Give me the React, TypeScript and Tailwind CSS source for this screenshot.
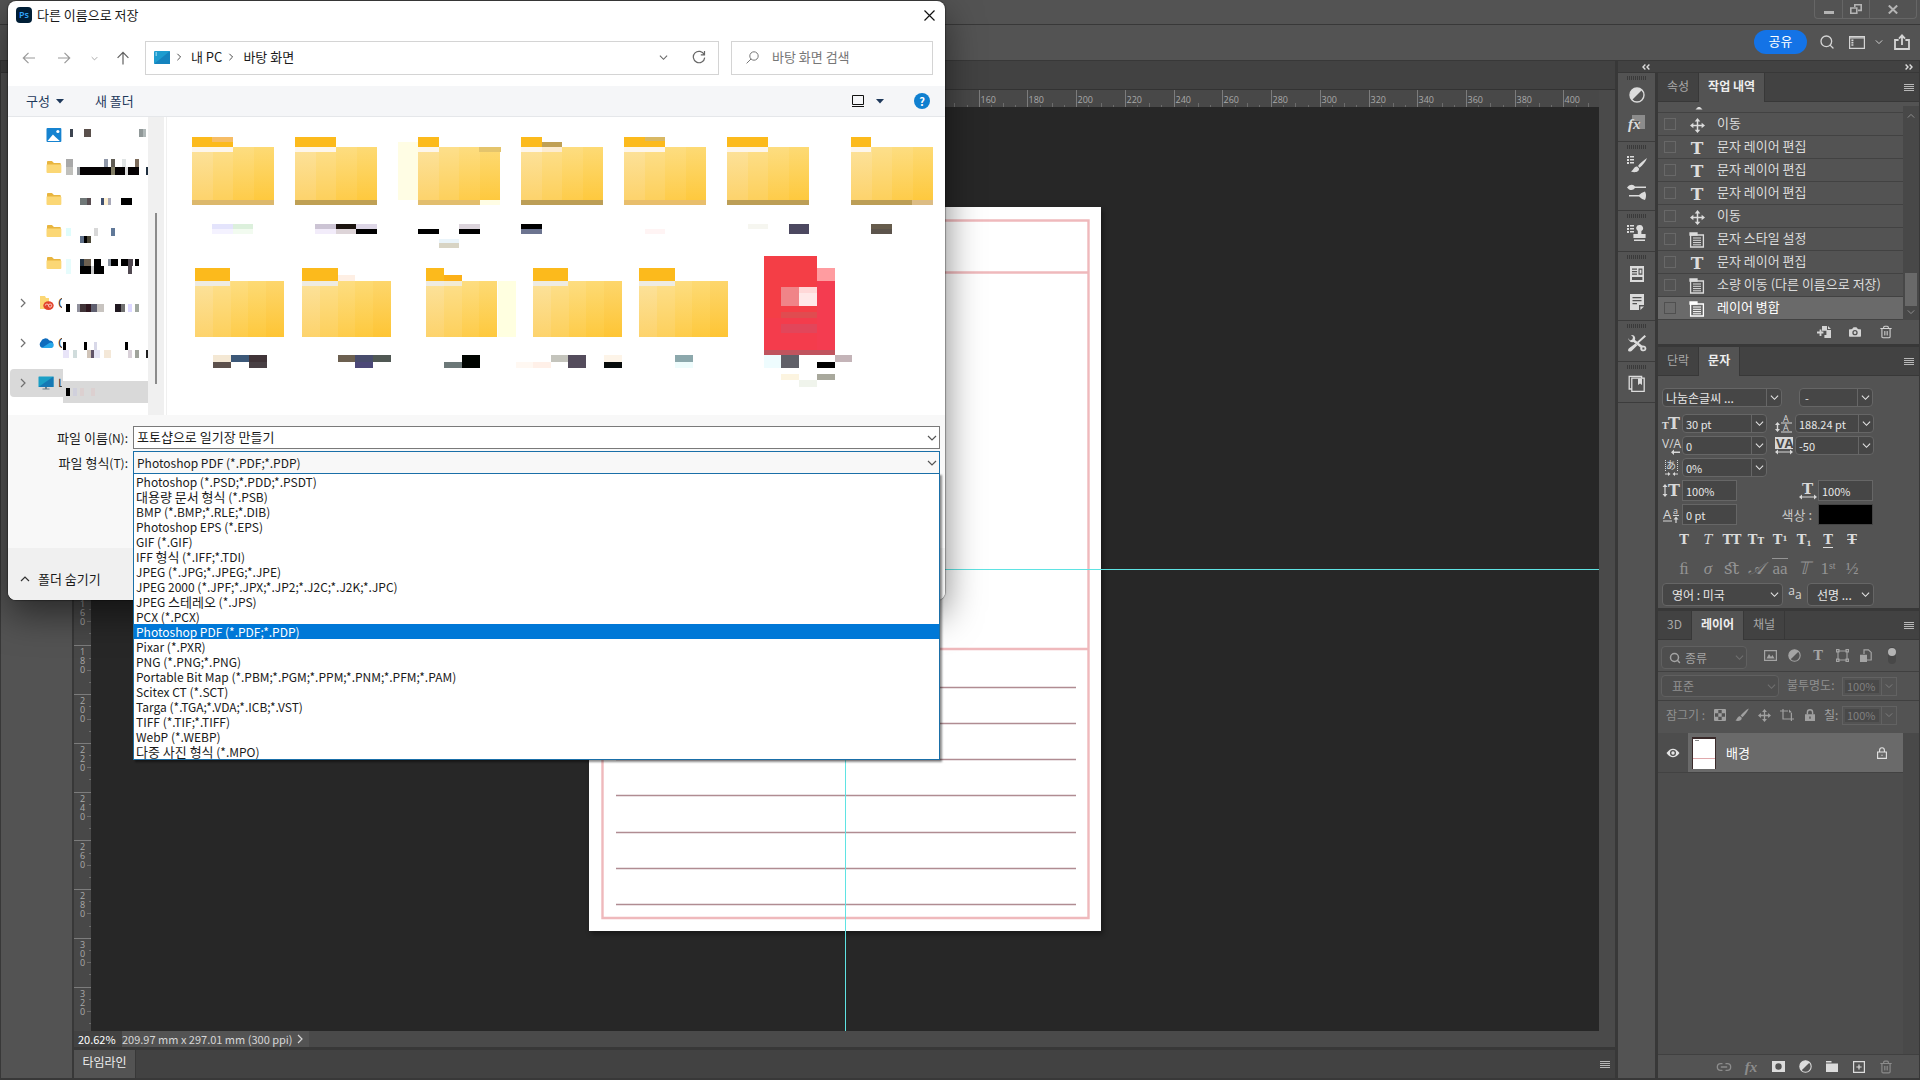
import type { ReactNode } from "react";
import { Search, Trash2, Camera, Link2 } from "lucide-react";

const fileTypes = [
  "Photoshop (*.PSD;*.PDD;*.PSDT)",
  "대용량 문서 형식 (*.PSB)",
  "BMP (*.BMP;*.RLE;*.DIB)",
  "Photoshop EPS (*.EPS)",
  "GIF (*.GIF)",
  "IFF 형식 (*.IFF;*.TDI)",
  "JPEG (*.JPG;*.JPEG;*.JPE)",
  "JPEG 2000 (*.JPF;*.JPX;*.JP2;*.J2C;*.J2K;*.JPC)",
  "JPEG 스테레오 (*.JPS)",
  "PCX (*.PCX)",
  "Photoshop PDF (*.PDF;*.PDP)",
  "Pixar (*.PXR)",
  "PNG (*.PNG;*.PNG)",
  "Portable Bit Map (*.PBM;*.PGM;*.PPM;*.PNM;*.PFM;*.PAM)",
  "Scitex CT (*.SCT)",
  "Targa (*.TGA;*.VDA;*.ICB;*.VST)",
  "TIFF (*.TIF;*.TIFF)",
  "WebP (*.WEBP)",
  "다중 사진 형식 (*.MPO)",
];
const selectedType = "Photoshop PDF (*.PDF;*.PDP)";

const historyStates = [
  { icon: "move", name: "이동" },
  { icon: "type", name: "문자 레이어 편집" },
  { icon: "type", name: "문자 레이어 편집" },
  { icon: "type", name: "문자 레이어 편집" },
  { icon: "move", name: "이동" },
  { icon: "doc", name: "문자 스타일 설정" },
  { icon: "type", name: "문자 레이어 편집" },
  { icon: "doc", name: "소량 이동 (다른 이름으로 저장)" },
  { icon: "doc", name: "레이어 병합" },
];

// x, y, width, height, fill
type Block = [number, number, number, number, string];

function Blocks({ blocks }: { blocks: Block[] }) {
  return (
    <>
      {blocks.map(([x, y, w, h, fill], i) => (
        <rect key={i} x={x} y={y} width={w} height={h} fill={fill} />
      ))}
    </>
  );
}

/* ---------- icons ---------- */

function Chevron({ dir = "down", size = 10, className = "" }: { dir?: "down" | "up" | "right"; size?: number; className?: string }) {
  const d = { down: "M1 3 L5 7 L9 3", up: "M1 7 L5 3 L9 7", right: "M3 1 L7 5 L3 9" }[dir];
  return (
    <svg width={size} height={size} viewBox="0 0 10 10" fill="none" stroke="currentColor" strokeWidth="1.2" className={`shrink-0 ${className}`} aria-hidden="true">
      <path d={d} />
    </svg>
  );
}

function MoveIcon({ size = 16 }: { size?: number }) {
  return (
    <svg width={size} height={size} viewBox="0 0 16 16" fill="currentColor" aria-hidden="true">
      <path d="M8 0 L11 3.6 H8.8 V7.2 H12.4 V5 L16 8 L12.4 11 V8.8 H8.8 V12.4 H11 L8 16 L5 12.4 H7.2 V8.8 H3.6 V11 L0 8 L3.6 5 V7.2 H7.2 V3.6 H5 Z" />
    </svg>
  );
}

function DocIcon() {
  return (
    <svg width="16" height="16" viewBox="0 0 16 16" fill="none" stroke="currentColor" strokeWidth="1.3" aria-hidden="true">
      <path d="M1.6 3 H14.4 V15 H1.6 Z" />
      <path d="M1 1 H8 V3 H1 Z" fill="currentColor" />
      <path d="M4 6 H12 M4 8.3 H12 M4 10.6 H12 M4 12.8 H12" strokeWidth="1" />
    </svg>
  );
}

function SlabT({ className = "" }: { className?: string }) {
  return <span className={`font-['DejaVu_Serif',serif] font-bold ${className}`}>T</span>;
}

function HalfCircle({ size = 16 }: { size?: number }) {
  return (
    <svg width={size} height={size} viewBox="0 0 16 16" aria-hidden="true">
      <circle cx="8" cy="8" r="7" fill="none" stroke="currentColor" strokeWidth="1.3" />
      <path d="M13 3 A7 7 0 0 0 3 13 Z" fill="currentColor" />
    </svg>
  );
}

function BrushIcon({ size = 14 }: { size?: number }) {
  return (
    <svg width={size} height={size} viewBox="0 0 14 14" fill="currentColor" aria-hidden="true">
      <path d="M13.8 0.4 C11 1.8 7.4 5 5.6 7.6 L7.4 9.2 C10 6.8 12.6 3.4 13.8 0.4 Z" />
      <path d="M5 8.2 C2.6 8 2.4 10.8 0.4 12.6 C3 13.8 7 12.8 6.8 9.8 Z" />
    </svg>
  );
}

function PanelMenu() {
  return (
    <button aria-label="패널 메뉴" className="text-[#b8b8b8]">
      <svg width="10" height="9" viewBox="0 0 10 9" stroke="currentColor" strokeWidth="1">
        <path d="M0 1.5 H10 M0 3.5 H10 M0 5.5 H10 M0 7.5 H10" />
      </svg>
    </button>
  );
}

function PsLogo() {
  return (
    <span className="flex h-4 w-4 items-center justify-center rounded-sm bg-[#001e36] font-['Open_Sans',sans-serif] text-[9px] font-semibold text-[#31a8ff]">
      Ps
    </span>
  );
}

/* ---------- save dialog ---------- */

function SmallFolder() {
  return (
    <svg width="16" height="14" viewBox="0 0 16 14" aria-hidden="true">
      <path d="M1 2 Q1 1 2 1 H6 L8 3 H14 Q15 3 15 4 V8 H1 Z" fill="#e8b53f" />
      <path d="M0.5 4.5 H14.5 Q15.5 4.5 15.5 5.5 V12 Q15.5 13 14.5 13 H1.5 Q0.5 13 0.5 12 Z" fill="#fbd775" />
    </svg>
  );
}

const quickFolders: Block[][] = [
  [
    [3, 8, 7, 8, "#a8a8a8"], [41, 8, 4, 8, "#9098a8"], [48, 8, 4, 8, "#605c54"], [59, 8, 4, 8, "#e0e4e4"], [72, 8, 4, 8, "#7c6c5c"],
    [3, 16, 7, 8, "#c0c0bc"], [14, 16, 3, 8, "#989ca0"], [17, 16, 59, 8, "#050203"], [48, 16, 4, 8, "#807c64"], [62, 16, 3, 8, "#dddddd"], [83, 16, 3, 8, "#203040"],
  ],
  [
    [17, 15, 7, 7, "#707878"], [24, 15, 4, 7, "#584c50"], [38, 15, 3, 7, "#405070"], [41, 15, 4, 7, "#fff0d0"], [45, 15, 3, 7, "#a8a8b8"], [58, 15, 11, 7, "#000000"],
  ],
  [
    [3, 13, 5, 8, "#dffcfc"], [31, 13, 4, 8, "#d8d8d8"], [48, 13, 4, 8, "#607898"],
    [17, 21, 4, 7, "#607088"], [21, 21, 3, 7, "#000000"], [24, 21, 4, 7, "#4c4838"],
  ],
  [
    [3, 12, 5, 15, "#e6fcfc"], [17, 12, 4, 7, "#203040"], [21, 12, 7, 7, "#6c6050"], [31, 12, 7, 7, "#000000"], [45, 12, 3, 7, "#8c94a0"], [48, 12, 7, 7, "#000000"], [58, 12, 7, 7, "#000000"], [65, 12, 5, 7, "#504850"], [72, 12, 4, 7, "#000000"],
    [17, 19, 11, 8, "#000000"], [28, 19, 3, 8, "#cccccc"], [31, 19, 10, 8, "#000000"], [65, 19, 4, 8, "#504850"],
  ],
];

const driveBlocks: Block[] = [
  [3, 21, 4, 8, "#000000"], [14, 21, 3, 8, "#90909c"], [17, 21, 6, 8, "#403438"], [23, 21, 5, 8, "#301820"], [28, 21, 6, 8, "#606070"], [34, 21, 7, 8, "#c8c4c0"],
  [52, 21, 6, 8, "#201820"], [58, 21, 4, 8, "#707070"], [65, 21, 4, 8, "#dcd8ff"], [72, 21, 4, 8, "#a0a8a0"],
];
const oneDriveBlocks: Block[] = [
  [0, 19, 3, 8, "#000000"], [21, 19, 3, 8, "#000000"], [31, 19, 3, 8, "#d8d8e8"], [62, 19, 3, 8, "#000000"],
  [0, 27, 6, 8, "#e8e4f8"], [10, 27, 4, 8, "#d0dcdc"], [24, 27, 4, 8, "#d0c4b8"], [28, 27, 4, 8, "#605468"], [31, 27, 6, 8, "#e4e4f4"], [41, 27, 7, 8, "#f4e8d8"], [65, 27, 4, 8, "#d8d0d8"], [72, 27, 4, 8, "#a0a49c"], [83, 27, 3, 8, "#202020"],
];
const pcBlocks: Block[] = [
  [0, 18, 86, 22, "#d9d9d9"], [3, 25, 4, 8, "#000000"], [10, 25, 4, 8, "#d0d0dc"], [17, 25, 4, 8, "#dcd0d0"], [28, 25, 4, 8, "#dcd0d0"],
];

function TreeRow({ icon, letter, blocks, active = false }: { icon: ReactNode; letter: string; blocks: Block[]; active?: boolean }) {
  return (
    <li className="flex h-10 items-center pl-0.5">
      <div className={`flex h-7 w-[53px] items-center rounded-l-sm pl-2 ${active ? "bg-[#d9d9d9]" : ""}`}>
        <Chevron dir="right" className="text-[#707070]" />
        <span className="ml-2.5 flex w-4 shrink-0 justify-center">{icon}</span>
        <span className="ml-1 w-1 overflow-hidden text-[13px] text-[#333]">{letter}</span>
      </div>
      <svg width="86" height="40" aria-hidden="true">
        <Blocks blocks={blocks} />
      </svg>
    </li>
  );
}

function NavPane() {
  return (
    <nav aria-label="탐색 창" className="flex w-[159px] shrink-0 border-r border-[#f0f0f0] pr-0.5">
      <ul className="w-[140px] overflow-hidden pt-0.5">
        <li className="flex h-8 items-center pl-[38px]">
          <svg width="16" height="16" viewBox="0 0 16 16" aria-hidden="true">
            <rect x="0.5" y="1" width="15" height="14" rx="1" fill="#1683d0" />
            <path d="M1.5 14 L7 7.5 L9.5 10 L14 14 Z" fill="#fff" />
            <circle cx="12" cy="4.5" r="1.6" fill="#fff" />
          </svg>
          <svg width="86" height="32" className="ml-px" aria-hidden="true">
            <Blocks blocks={[[7, 10, 3, 8, "#3c4450"], [21, 10, 7, 8, "#5a504c"], [76, 10, 4, 8, "#909898"], [80, 10, 3, 8, "#b0b8b8"]]} />
          </svg>
        </li>
        {quickFolders.map((blocks, i) => (
          <li key={i} className="flex h-8 items-center pl-[38px]">
            <SmallFolder />
            <svg width="86" height="32" className="ml-px" aria-hidden="true">
              <Blocks blocks={blocks} />
            </svg>
          </li>
        ))}
        <li className="h-1" />
        <TreeRow
          letter="C"
          blocks={driveBlocks}
          icon={
            <svg width="16" height="16" viewBox="0 0 16 16" aria-hidden="true">
              <path d="M2 1 H7 L8 3 H11 V14 H2 Z" fill="#fbd775" />
              <ellipse cx="10.5" cy="10.6" rx="5.2" ry="4.4" fill="#e2432c" />
              <path d="M7.3 10.6 a1.6 1.6 0 1 1 3.2 0 a1.6 1.6 0 1 0 3.2 0 a1.6 1.6 0 1 0 -3.2 0" fill="none" stroke="#ffd8d0" strokeWidth="0.9" />
            </svg>
          }
        />
        <TreeRow
          letter="O"
          blocks={oneDriveBlocks}
          icon={
            <svg width="16" height="12" viewBox="0 0 17 12" className="shrink-0" aria-hidden="true">
              <path d="M4 11 A4 4 0 0 1 3 4.6 A5 5 0 0 1 12 3.4 A4 4 0 0 1 14 11 Z" fill="#0f6cbd" />
              <path d="M4 11.2 L12 6 A3 3 0 0 1 16.6 8 A3 3 0 0 1 14 11.2 Z" fill="#28a8ea" />
            </svg>
          }
        />
        <TreeRow
          letter="내"
          active
          blocks={pcBlocks}
          icon={
            <svg width="16" height="14" viewBox="0 0 16 14" aria-hidden="true">
              <rect x="0.5" y="0.5" width="15" height="10.5" rx="0.5" fill="#1b9fc6" />
              <path d="M0.5 11 L15.5 0.5 V11 Z" fill="#1578b4" />
              <path d="M7 11 H9 V13 H7 Z M4.5 12.6 H11.5 V13.6 H4.5 Z" fill="#6d7f8a" />
            </svg>
          }
        />
      </ul>
      <div className="flex flex-1 justify-center bg-[#f0f0f0] pt-24">
        <div className="h-[171px] w-0.5 bg-[#8b8b8b]" />
      </div>
    </nav>
  );
}

const folderTones = [
  ["#fce29c", "#fdd36c"],
  ["#fddf8b", "#fdd05c"],
  ["#fddd80", "#fecc4a"],
  ["#fdda74", "#fec93e"],
  ["#fdd66c", "#fec535"],
];

// top-row thumbnails are 4 mosaic columns wide, bottom-row ones up to 5
function FolderTile({ id, cols, colWidth, top, tab, bottom, strip, extra = [] }: {
  id: string; cols: number; colWidth: number; top: number; tab: number; bottom: number; strip?: string; extra?: Block[];
}) {
  const bodyTop = top + (cols === 4 && strip !== "none" ? 10 : 13);
  const w = cols * colWidth;
  return (
    <>
      <defs>
        {folderTones.map(([from, to], i) => (
          <linearGradient key={i} id={`${id}-${i}`} x1="0" y1="0" x2="0" y2="1">
            <stop offset="0" stopColor={from} />
            <stop offset="1" stopColor={to} />
          </linearGradient>
        ))}
      </defs>
      <rect x="0" y={top} width={tab} height={bodyTop - top} fill="#fcba1c" />
      {Array.from({ length: cols }, (_, i) => (
        <rect key={i} x={i * colWidth} y={bodyTop} width={colWidth} height={bottom - bodyTop} fill={`url(#${id}-${i})`} shapeRendering="crispEdges" />
      ))}
      <rect x="0" y={bodyTop} width={tab} height="5" fill={strip === "none" ? "#eeebe2" : "#fdf6ec"} />
      {strip && strip !== "none" && <rect x="0" y={bottom} width={w} height="5" fill={strip} />}
      <Blocks blocks={extra} />
    </>
  );
}

// y values are measured from the top of the thumbnail row
const topRow: { cell: string; tab: number; strip: string; extra: Block[] }[] = [
  { cell: "w-[103px]", tab: 41, strip: "#dcb86c", extra: [[20, 20, 21, 5, "#f6bd66"], [20, 107, 21, 5, "#e4e4fc"], [41, 107, 20, 5, "#dcf0dc"], [20, 112, 21, 5, "#f4f2ff"], [41, 112, 20, 5, "#f2fbf0"]] },
  { cell: "w-[123px]", tab: 41, strip: "#bfa054", extra: [[20, 107, 21, 5, "#ccc4d4"], [41, 107, 20, 5, "#1c1410"], [61, 107, 21, 5, "#ddd6e6"], [20, 112, 21, 5, "#f2ecfa"], [41, 112, 20, 5, "#ddd4d8"], [61, 112, 21, 5, "#000000"]] },
  { cell: "w-[103px]", tab: 21, strip: "#e2be6e", extra: [[-20, 25, 20, 58, "#fffde4"], [61, 30, 22, 5, "#e4c46c"], [62, 83, 20, 5, "#fffde4"], [0, 112, 21, 5, "#000000"], [41, 107, 21, 5, "#dcd4dc"], [41, 112, 21, 5, "#000000"], [21, 122, 20, 4, "#eaf4fa"], [21, 126, 20, 5, "#d8d4c4"]] },
  { cell: "w-[103px]", tab: 21, strip: "#bc9e56", extra: [[21, 25, 20, 5, "#c0a054"], [21, 30, 20, 5, "#fdecd0"], [0, 107, 21, 5, "#000000"], [0, 112, 21, 5, "#6c7490"]] },
  { cell: "w-[103px]", tab: 41, strip: "#e8be6c", extra: [[21, 20, 20, 4, "#d8b864"], [21, 112, 20, 5, "#fff4f4"]] },
  { cell: "w-[124px]", tab: 41, strip: "#bc9e56", extra: [[21, 107, 20, 5, "#f6f6f0"], [62, 107, 20, 10, "#4c4860"]] },
  { cell: "w-[82px]", tab: 20, strip: "#bc9e56", extra: [[61, 83, 21, 5, "#dcbc84"], [20, 107, 21, 5, "#665c4c"], [20, 112, 21, 5, "#5c544c"]] },
];

const bottomRow: { cell: string; cols: number; tab: number; extra: Block[] }[] = [
  { cell: "w-[107px]", cols: 5, tab: 35, extra: [[18, 107, 18, 7, "#f4e8d4"], [36, 107, 18, 7, "#3c5878"], [54, 107, 18, 7, "#403438"], [18, 114, 18, 6, "#5c504c"], [54, 114, 18, 6, "#484044"]] },
  { cell: "w-[124px]", cols: 5, tab: 36, extra: [[36, 27, 17, 6, "#feefe4"], [36, 107, 17, 7, "#6c6050"], [53, 107, 18, 7, "#484c6c"], [53, 114, 18, 6, "#4c4878"], [71, 107, 18, 7, "#505854"]] },
  { cell: "w-[107px]", cols: 4, tab: 18, extra: [[18, 27, 18, 6, "#fcb018"], [18, 33, 18, 5, "#f2ebd4"], [72, 33, 18, 56, "#ffffe0"], [18, 114, 18, 6, "#6c7878"], [36, 107, 18, 13, "#000400"]] },
  { cell: "w-[106px]", cols: 5, tab: 35, extra: [[-17, 114, 17, 6, "#fff8f2"], [0, 114, 18, 6, "#fff0e8"], [18, 107, 17, 7, "#c4c4bc"], [35, 107, 18, 13, "#544c5c"], [71, 107, 18, 7, "#fdf4e8"], [71, 114, 18, 6, "#080c0c"]] },
  { cell: "w-[125px]", cols: 5, tab: 36, extra: [[36, 107, 18, 7, "#8ca8ac"], [36, 114, 18, 6, "#eefcfc"]] },
];

const pdfBlocks: Block[] = [
  [0, 8, 53, 94, "#f43e46"], [53, 33, 18, 69, "#f43c50"], [53, 20, 18, 13, "#ff9ca0"], [0, 70, 53, 32, "#f43c4c"],
  [17, 39, 18, 19, "#f08488"], [35, 39, 18, 6, "#ffd8d8"], [35, 45, 18, 13, "#ffe8e8"], [17, 64, 36, 6, "#e04c50"], [17, 76, 36, 9, "#e2465a"],
  [0, 102, 71, 5, "#c0545e"], [17, 107, 18, 13, "#606068"], [53, 114, 18, 6, "#000000"], [71, 107, 17, 7, "#c4b4b8"],
  [0, 107, 17, 13, "#eefcfe"], [17, 126, 18, 6, "#fcf4e0"], [35, 132, 18, 7, "#f0f4ec"], [53, 126, 18, 6, "#a8a89c"],
];

function FileList() {
  return (
    <div className="min-w-0 flex-1 pl-[25px]">
      <div className="flex h-[131px]">
        {topRow.map((f, i) => (
          <svg key={i} height="131" className={`shrink-0 overflow-visible ${f.cell}`} role="img" aria-label="폴더">
            <FolderTile id={`t${i}`} cols={4} colWidth={20.5} top={20} tab={f.tab} bottom={83} strip={f.strip} extra={f.extra} />
          </svg>
        ))}
      </div>
      <div className="flex h-[140px] pl-[3px]">
        {bottomRow.map((f, i) => (
          <svg key={i} height="140" className={`shrink-0 overflow-visible ${f.cell}`} role="img" aria-label="폴더">
            <FolderTile id={`b${i}`} cols={f.cols} colWidth={17.8} top={20} tab={f.tab} bottom={89} strip="none" extra={f.extra} />
          </svg>
        ))}
        <svg width="90" height="140" className="shrink-0 overflow-visible" role="img" aria-label="PDF 파일">
          <Blocks blocks={pdfBlocks} />
        </svg>
      </div>
    </div>
  );
}

function ArrowIcon({ d }: { d: string }) {
  return (
    <svg width="14" height="14" viewBox="0 0 14 14" fill="none" stroke="currentColor" strokeWidth="1.2" aria-hidden="true">
      <path d={d} />
    </svg>
  );
}

// Hangul is set one step larger than the Latin around it
function MixedText({ text }: { text: string }) {
  return (
    <>
      {text.split(/([가-힣]+(?: [가-힣]+)*)/).map((part, i) => (i % 2 ? <span key={i} className="text-[13px]">{part}</span> : part))}
    </>
  );
}

function SaveDialog() {
  return (
    <div role="dialog" aria-label="다른 이름으로 저장" className="absolute left-2 top-px w-[937px] rounded-lg bg-white text-[13px] leading-4 text-[#1a1a1a] shadow-[0_0_1px_1px_rgba(0,0,0,0.3),0_14px_36px_rgba(0,0,0,0.5)]">
      <div className="flex h-7 items-center pl-2">
        <PsLogo />
        <h1 className="ml-[5px] flex-1">다른 이름으로 저장</h1>
        <button aria-label="닫기" className="mr-2.5">
          <svg width="11" height="11" viewBox="0 0 11 11" stroke="#111" strokeWidth="1.2">
            <path d="M0.5 0.5 L10.5 10.5 M10.5 0.5 L0.5 10.5" />
          </svg>
        </button>
      </div>

      <div className="flex items-center pb-[11px] pr-3 pt-3">
        <div className="flex w-[137px] items-center pl-3.5 text-[#9a9a9a]">
          <button aria-label="뒤로"><ArrowIcon d="M13 7 H1.5 M6.5 1.8 L1.3 7 L6.5 12.2" /></button>
          <button aria-label="앞으로" className="ml-[21px]"><ArrowIcon d="M1 7 H12.5 M7.5 1.8 L12.7 7 L7.5 12.2" /></button>
          <button aria-label="최근 위치" className="ml-5"><Chevron size={7} /></button>
          <button aria-label="위로" className="ml-[18px] text-[#606060]"><ArrowIcon d="M7 13.5 V1.5 M1.6 6.8 L7 1.3 L12.4 6.8" /></button>
        </div>
        <div className="flex h-[34px] flex-1 items-center border border-[#d4d4d4] pb-0.5 pl-2">
          <svg width="16" height="13" viewBox="0 0 16 13" aria-hidden="true">
            <rect width="16" height="13" rx="1" fill="#1d9ccf" />
            <path d="M0 13 L16 0 V13 Z" fill="#1583be" />
            <path d="M1.5 2 H3 M1.5 4 H3" stroke="#d8f4ff" />
          </svg>
          <Chevron dir="right" size={8} className="ml-[5px] text-[#444]" />
          <span className="ml-2">내 PC</span>
          <Chevron dir="right" size={8} className="ml-[5px] text-[#444]" />
          <span className="ml-2 flex-1">바탕 화면</span>
          <button aria-label="이전 위치"><Chevron size={9} className="text-[#666]" /></button>
          <button aria-label="새로 고침" className="ml-6 mr-3">
            <svg width="14" height="14" viewBox="0 0 14 14" fill="none" stroke="#666" strokeWidth="1.2">
              <path d="M12.2 4.6 A5.7 5.7 0 1 0 12.7 7.6 M12.5 1 V4.8 H8.8" />
            </svg>
          </button>
        </div>
        <label className="ml-3 flex h-[34px] w-[202px] items-center border border-[#d4d4d4] pb-0.5 pl-3.5">
          <svg width="13" height="13" viewBox="0 0 13 13" fill="none" stroke="#777" strokeWidth="1" aria-hidden="true">
            <circle cx="8" cy="5" r="4.2" />
            <path d="M5 8 L0.6 12.4" />
          </svg>
          <input type="search" aria-label="바탕 화면 검색" placeholder="바탕 화면 검색" className="ml-[13px] w-36 placeholder:text-[#767676]" />
        </label>
      </div>

      <div className="flex h-[31px] items-center border-b border-[#e5e7ea] bg-[#f5f6f8] pl-[18px] text-[#1e395b]">
        <button className="flex items-center gap-1.5">
          구성
          <svg width="8" height="5" viewBox="0 0 8 5" fill="currentColor"><path d="M0 0 H8 L4 4.5 Z" /></svg>
        </button>
        <button className="ml-[31px]">새 폴더</button>
        <button aria-label="보기 변경" className="ml-auto flex items-center gap-3">
          <svg width="12" height="12" viewBox="0 0 12 12" fill="none" stroke="#111" strokeWidth="1"><path d="M0.5 0.5 H11.5 V9.5 H0.5 Z M0 11.5 H12" /></svg>
          <svg width="8" height="5" viewBox="0 0 8 5" fill="currentColor"><path d="M0 0 H8 L4 4.5 Z" /></svg>
        </button>
        <button aria-label="도움말" className="ml-[30px] mr-[15px] h-4 w-4 rounded-full bg-[#1080d0] text-center text-[11px] font-bold text-white">?</button>
      </div>

      <div className="flex h-[298px]">
        <NavPane />
        <FileList />
      </div>

      <div className="flex h-[133px] flex-col gap-0.5 bg-[#f8f8f8] pr-[5px] pt-[11px]">
        <div className="flex h-[23px] items-center">
          <label htmlFor="file-name" className="w-[125px] pr-[5px] text-right"><span className="text-[13px]">파일 이름</span><span className="text-[12px]">(N):</span></label>
          <div className="flex h-full flex-1 items-center border border-[#7a7a7a] bg-white pr-0.5">
            <input id="file-name" defaultValue="포토샵으로 일기장 만들기" className="min-w-0 flex-1 pb-0.5 pl-[3px]" />
            <Chevron className="text-[#555]" />
          </div>
        </div>
        <div className="flex h-[23px] items-center">
          <label htmlFor="file-type" className="w-[125px] pr-[5px] text-right"><span className="text-[13px]">파일 형식</span><span className="text-[12px]">(T):</span></label>
          <div className="relative flex h-full flex-1 items-center border border-[#1a6fa8] pr-0.5">
            <select id="file-type" defaultValue={selectedType} className="min-w-0 flex-1 appearance-none pl-[3px] text-[12px]">
              {fileTypes.map((t) => <option key={t}>{t}</option>)}
            </select>
            <Chevron className="text-[#555]" />
            <ul role="listbox" aria-label="파일 형식" className="absolute -inset-x-px top-full border border-[#1a6fa8] bg-white text-[12px] shadow-[2px_2px_2px_rgba(0,0,0,0.45)]">
              {fileTypes.map((t) => (
                <li key={t} role="option" aria-selected={t === selectedType} className={`h-[15px] whitespace-nowrap pl-0.5 leading-[15px] ${t === selectedType ? "bg-[#0078d7] text-white" : ""}`}>
                  <MixedText text={t} />
                </li>
              ))}
            </ul>
          </div>
        </div>
      </div>

      <div className="flex h-[52px] items-center rounded-b-lg bg-[#f0f0f0] pl-3 pt-2.5">
        <button className="flex items-center gap-2">
          <Chevron dir="up" className="text-[#333]" />
          폴더 숨기기
        </button>
      </div>
    </div>
  );
}

/* ---------- document window ---------- */

// 2.436px per millimetre at 20.62%
const MM = 2.436;
const range = (from: number, to: number) => Array.from({ length: (to - from) / 5 + 1 }, (_, i) => from + i * 5);

function HorizontalRuler() {
  return (
    <svg width="100%" height="17" className="block shrink-0 overflow-hidden bg-[#484848]" aria-hidden="true">
      {range(145, 410).map((m) => {
        const x = Math.round(515 + m * MM) + 0.5;
        const major = m % 20 === 0;
        return (
          <g key={m}>
            <path d={`M${x} ${major ? 0 : m % 10 === 0 ? 13 : 15} V17`} stroke={major ? "#7c7c7c" : "#6c6c6c"} />
            {major && <text x={x + 1} y="13" fontSize="9" fill="#a8a8a8" className="font-['Open_Sans',sans-serif]">{m}</text>}
          </g>
        );
      })}
    </svg>
  );
}

function VerticalRuler() {
  return (
    <svg width="17" className="block h-full shrink-0 overflow-hidden bg-[#484848]" aria-hidden="true">
      {range(160, 335).map((m) => {
        const y = Math.round(100 + m * MM) + 0.5;
        const major = m % 20 === 0;
        return (
          <g key={m}>
            <path d={`M${major ? 0 : m % 10 === 0 ? 13 : 15} ${y} H17`} stroke={major ? "#7c7c7c" : "#6c6c6c"} />
            {major && String(m).split("").map((c, i) => (
              <text key={i} x="6" y={y + 9 + i * 9} fontSize="9" fill="#a8a8a8" className="font-['Open_Sans',sans-serif]">{c}</text>
            ))}
          </g>
        );
      })}
    </svg>
  );
}

function Artwork() {
  return (
    <svg width="512" height="724" viewBox="0 0 512 724" className="absolute left-[498px] top-[100px] bg-white shadow-[2px_3px_5px_rgba(0,0,0,0.4)]" role="img" aria-label="일기장">
      <path d="M13.5 13.5 H499.5 V711 H13.5 Z M13.5 65.5 H499.5 M13.5 442 H499.5" fill="none" stroke="#efb9bc" strokeWidth="2.4" />
      {[480, 516, 552, 588, 625, 661, 697].map((y) => (
        <path key={y} d={`M27 ${y + 0.5} H487`} stroke="#b08c92" strokeWidth="1.6" />
      ))}
    </svg>
  );
}

function DocumentWindow() {
  return (
    <main className="flex min-w-0 flex-1 flex-col">
      <div className="h-[29px] shrink-0 border-b border-[#333] bg-[#424242]" />
      <div className="flex min-h-0 flex-1">
        <div className="flex min-w-0 flex-1 flex-col">
          <HorizontalRuler />
          <div className="flex min-h-0 flex-1">
            <VerticalRuler />
            <div className="relative flex-1 overflow-hidden bg-[#272727]">
              <Artwork />
              <div className="absolute inset-x-0 top-[462px] h-px bg-[#5fe3e3]" />
              <div className="absolute inset-y-0 left-[754px] w-px bg-[#5fe3e3]" />
            </div>
          </div>
        </div>
        <div className="w-4 shrink-0 bg-[#4a4a4a]" />
      </div>
      <div className="flex h-4 shrink-0 items-center bg-[#4a4a4a] text-[11px] leading-4 text-[#d6d6d6]">
        <span className="w-12 bg-[#424242] pl-1 text-white">20.62%</span>
        <span className="flex items-center gap-0.5 bg-[#535353] pr-1">
          209.97 mm x 297.01 mm (300 ppi)
          <Chevron dir="right" />
        </span>
      </div>
      <div className="mt-[3px] flex h-[30px] shrink-0 border-b-2 border-[#383838] bg-[#424242]">
        <button className="w-[62px] border-r border-[#383838] bg-[#535353] pb-1 text-[12px] text-[#eee]">타임라인</button>
        <span className="ml-auto mr-[5px] flex items-center"><PanelMenu /></span>
      </div>
    </main>
  );
}

/* ---------- collapsed icon dock ---------- */

function DockGroup({ children }: { children: ReactNode }) {
  return (
    <div className="flex flex-col items-center border-b border-[#3c3c3c] pt-[3px]">
      <svg width="20" height="4" stroke="#3a3a3a" aria-hidden="true">
        <path d="M0.5 0 V4 M2.5 0 V4 M4.5 0 V4 M6.5 0 V4 M8.5 0 V4 M10.5 0 V4 M12.5 0 V4 M14.5 0 V4 M16.5 0 V4 M18.5 0 V4" />
      </svg>
      <div className="w-full pb-1 pt-px">{children}</div>
    </div>
  );
}

function DockButton({ label, children }: { label: string; children: ReactNode }) {
  return (
    <button aria-label={label} className="flex h-7 w-full items-center justify-center text-[#dcdcdc]">
      <svg width="20" height="18" viewBox="0 0 20 18" fill="currentColor">{children}</svg>
    </button>
  );
}

function IconDock() {
  return (
    <aside className="w-[37px] shrink-0 bg-[#535353]">
      <DockGroup>
        <DockButton label="조정">
          <circle cx="10" cy="9" r="7" fill="none" stroke="currentColor" strokeWidth="1.4" />
          <path d="M15 4 A7 7 0 0 0 5 14 Z" />
        </DockButton>
        <DockButton label="스타일">
          <path d="M5 1 H18 V15 H12 V7 H5 Z" fill="#8c8c8c" />
          <text x="1" y="15" fontSize="15" fontStyle="italic" className="font-['Liberation_Serif',serif] font-bold">fx</text>
        </DockButton>
      </DockGroup>
      <DockGroup>
        <DockButton label="브러시 설정">
          <path d="M0 1 H2 V3 H0 Z M3 1 H7 V2.4 H3 Z M0 4 H2 V6 H0 Z M3 4 H7 V5.4 H3 Z M0 7 H2 V9 H0 Z M3 7 H7 V8.4 H3 Z" />
          <path d="M20 3 C17 5 13 8 11 11 L12.6 12.8 C15.6 10.4 18.8 6.6 20 3 Z M10.2 11.6 C7.4 11 7 14.6 4 16.4 C7 18 12.4 17.4 12 13.6 Z" />
        </DockButton>
        <DockButton label="브러시">
          <path d="M0 4.5 L2 2.5 Q6 0.5 8 3.5 H19 V5 H8 Q6 8 2 6.5 Z M2 12 H12 Q14 9.5 18 8.5 Q20 12.5 18 17 Q14 16 12 13.6 H2 Z" />
        </DockButton>
      </DockGroup>
      <DockGroup>
        <DockButton label="복제 원본">
          <path d="M0 1 H2 V3 H0 Z M3 1 H7 V2.4 H3 Z M0 4 H2 V6 H0 Z M3 4 H7 V5.4 H3 Z M0 7 H2 V9 H0 Z M3 7 H7 V8.4 H3 Z" />
          <path d="M12.5 1 A3.2 3.2 0 0 1 14.4 7 V10 H18.6 V14 H6.4 V10 H10.8 V7 A3.2 3.2 0 0 1 12.5 1 Z M7 15.6 H18 V17 H7 Z" />
        </DockButton>
      </DockGroup>
      <DockGroup>
        <DockButton label="라이브러리">
          <path fillRule="evenodd" d="M3 1 H17 V17 H3 Z M5 3.5 V4.7 H10 V3.5 Z M5 6 V7.2 H10 V6 Z M5 8.5 V9.7 H10 V8.5 Z M11.5 3.5 V9.7 H15.4 V3.5 Z M5 12 V15 H15.4 V12 Z" />
          <path d="M12.6 4.8 H14.4 V8.4 H12.6 Z" />
        </DockButton>
        <DockButton label="메모">
          <path fillRule="evenodd" d="M3 1 H17 V12 H12 V17 H3 Z M5.5 4 V5.3 H14.5 V4 Z M5.5 7 V8.3 H14.5 V7 Z M5.5 10 V11.3 H10 V10 Z" />
          <path d="M13.4 13.4 H17 L13.4 17 Z" />
        </DockButton>
      </DockGroup>
      <DockGroup>
        <DockButton label="도구 사전 설정">
          <path d="M1 4 L3 6.4 L5.4 5.6 L6 3 L4 1 Q7.6 0.6 8.2 4 L8 6 L15 11.6 Q19.4 11.4 19.4 15 Q18.6 18 15.4 17.2 Q12.6 16.4 13.4 13.4 L6.4 8 Q2.4 9 1 4 Z M15.4 13.6 V15.6 H17.4 V13.6 Z" fillRule="evenodd" />
          <path d="M19 2.4 L11.4 9.2 L10 8 L17.6 1 Z M8.4 9.4 L10.4 11.2 L4.6 17 Q1.4 18.4 1 16.2 Q1 14.6 3 13.4 Z" />
        </DockButton>
      </DockGroup>
      <DockGroup>
        <DockButton label="학습">
          <path d="M4.8 3.2 H17.2 V16.4 H4.8 Z M4.8 14 H2.2 V1.4 H14.6 V3" fill="none" stroke="currentColor" strokeWidth="1.3" />
          <path d="M11 3.5 H15 V10 L13 8.4 L11 10 Z" />
        </DockButton>
      </DockGroup>
    </aside>
  );
}

/* ---------- right panels ---------- */

function PanelTabs({ tabs, active }: { tabs: string[]; active: string }) {
  return (
    <div role="tablist" className="flex h-[29px] shrink-0 items-stretch border-b border-[#383838] bg-[#424242] pr-[5px] text-[12px]">
      {tabs.map((t) => (
        <button
          key={t}
          role="tab"
          aria-selected={t === active}
          className={`-mb-px border-r border-[#383838] px-[9px] pb-[3px] ${t === active ? "bg-[#535353] font-bold text-[#eee]" : "text-[#a8a8a8]"}`}
        >
          {t}
        </button>
      ))}
      <span className="ml-auto flex items-center"><PanelMenu /></span>
    </div>
  );
}

function HistoryPanel() {
  return (
    <section aria-label="작업 내역" className="bg-[#535353]">
      <PanelTabs tabs={["속성", "작업 내역"]} active="작업 내역" />
      <div className="mt-1 flex">
        <ul className="min-w-0 flex-1">
          <li className="flex h-[7px] justify-start overflow-hidden border-b border-[#424242] pl-[37px] text-[#dcdcdc]">
            <svg width="8" height="4" fill="currentColor"><path d="M0.5 3.5 L3 1 H5 L7.5 3.5 Z" /></svg>
          </li>
          {historyStates.map((s, i) => {
            const last = i === historyStates.length - 1;
            return (
              <li key={i} className={`flex h-[23px] items-center border-b border-[#424242] text-[13px] ${last ? "bg-[#6a6a6a] text-white" : "text-[#dcdcdc]"}`}>
                <input type="checkbox" aria-label={s.name} className={`ml-1.5 h-3 w-3 appearance-none border ${last ? "border-[#505050]" : "border-[#686868]"}`} />
                <span className="ml-[11px] flex w-5 items-center justify-center pt-0.5">
                  {s.icon === "move" && <MoveIcon size={15} />}
                  {s.icon === "type" && <SlabT className="text-[17px] leading-4" />}
                  {s.icon === "doc" && <DocIcon />}
                </span>
                <span className="ml-2.5 whitespace-nowrap pb-0.5">{s.name}</span>
              </li>
            );
          })}
        </ul>
        <div className="flex w-4 flex-col items-center bg-[#484848] pb-1 pt-1.5 text-[#909090]">
          <Chevron dir="up" size={8} />
          <div className="mt-auto h-[33px] w-3 bg-[#696969]" />
          <Chevron size={8} className="mt-0.5" />
        </div>
      </div>
      <div className="flex h-6 items-center justify-end gap-4 pr-[26px] text-[#d4d4d4]">
        <button aria-label="새 문서 만들기">
          <svg width="14" height="12" viewBox="0 0 14 12" fill="currentColor">
            <path d="M5 0 H10 V4 H14 V12 H7.4 V9 H9.4 V4.8 H5 Z M11 0 L14 3 H11 Z M2.6 3.6 H4.4 V5.6 H6.4 V7.4 H4.4 V10 H2.6 V7.4 H0 V5.6 H2.6 Z" />
          </svg>
        </button>
        <button aria-label="새 스냅숏">
          <Camera size={16} fill="currentColor" stroke="#535353" strokeWidth={2} />
        </button>
        <button aria-label="삭제"><Trash2 size={14} strokeWidth={1.8} /></button>
      </div>
    </section>
  );
}

function DarkSelect({ label, value, className = "", height = "h-[19px]", box = true }: { label: string; value: string; className?: string; height?: string; box?: boolean }) {
  return (
    <div className={`flex items-center rounded-sm border border-[#666] bg-[#464646] text-[#e6e6e6] ${height} ${className}`}>
      <select aria-label={label} defaultValue={value} className="h-full min-w-0 flex-1 appearance-none pl-[3px]">
        <option>{value}</option>
      </select>
      <span className={`flex h-full w-[15px] items-center justify-center ${box ? "border-l border-[#666]" : ""}`}>
        <Chevron size={9} />
      </span>
    </div>
  );
}

function DarkInput({ label, value, className = "" }: { label: string; value: string; className?: string }) {
  return <input aria-label={label} defaultValue={value} className={`h-[21px] w-[55px] border border-[#666] bg-[#464646] pl-[3px] text-[#e6e6e6] ${className}`} />;
}

// glyph in front of each character field
function FieldIcon({ children }: { children: ReactNode }) {
  return (
    <svg width="20" height="19" viewBox="0 0 20 19" className="shrink-0 overflow-visible text-[#d8d8d8]" fill="currentColor" aria-hidden="true">
      {children}
    </svg>
  );
}

const serif = "font-['DejaVu_Serif',serif] font-bold";
const sans = "font-['Open_Sans',sans-serif]";

const fauxStyles = [
  { label: "포 볼드체", node: <b>T</b> },
  { label: "포 이탤릭", node: <i className="font-normal">T</i> },
  { label: "모두 대문자", node: <>TT</> },
  { label: "작은 대문자", node: <>T<span className="text-[9px]">T</span></> },
  { label: "위 첨자", node: <>T<sup className="text-[7px]">1</sup></> },
  { label: "아래 첨자", node: <>T<sub className="text-[7px]">1</sub></> },
  { label: "밑줄", node: <span className="border-b border-current">T</span> },
  { label: "취소선", node: <span className="line-through">T</span> },
];

const openTypeFeatures = [
  { label: "표준 합자", node: "ﬁ" },
  { label: "문맥 대체", node: <i>σ</i> },
  { label: "임의 합자", node: "ﬆ" },
  { label: "스워시", node: <i>𝒜</i> },
  { label: "스타일 대체", node: <span className="border-t border-current leading-3">aa</span> },
  { label: "타이틀 대체", node: <i>𝕋</i> },
  { label: "서수", node: <>1<sup className="text-[10px]">st</sup></> },
  { label: "분수", node: "½" },
];

function CharacterPanel() {
  return (
    <section aria-label="문자" className="border-t-2 border-[#383838] bg-[#535353]">
      <PanelTabs tabs={["단락", "문자"]} active="문자" />
      <div className="flex flex-col pb-0.5 pl-1 pt-3 text-[11px] leading-4">
        <div className="flex">
          <DarkSelect label="글꼴" value="나눔손글씨 ..." className="w-[120px] text-[12px]" />
          <DarkSelect label="글꼴 스타일" value="-" className="ml-[17px] w-[74px] pl-0.5" />
        </div>
        <div className="mt-[7px] flex">
          <FieldIcon>
            <text x="0" y="15" fontSize="9" className={serif}>T</text>
            <text x="6" y="15" fontSize="16" className={serif}>T</text>
          </FieldIcon>
          <DarkSelect label="글꼴 크기" value="30 pt" className="w-[85px]" />
          <span className="ml-2 flex">
            <FieldIcon>
              <text x="8" y="8" fontSize="9" className={sans}>A</text>
              <text x="8" y="17" fontSize="9" className={sans}>A</text>
              <path d="M6 8.6 H17 V9.6 H6 Z M6 17.6 H17 V18.6 H6 Z M2.5 8 L5 11 H3.2 V15 H5 L2.5 18 L0 15 H1.8 V11 H0 Z" />
            </FieldIcon>
          </span>
          <DarkSelect label="행간" value="188.24 pt" className="w-[79px]" />
        </div>
        <div className="mt-[3px] flex">
          <FieldIcon>
            <text x="0" y="12" fontSize="12" className={sans}>V/A</text>
            <path d="M18 15.4 H12 V13.4 L9 16.2 L12 19 V17 H18 Z" />
          </FieldIcon>
          <DarkSelect label="커닝" value="0" className="w-[85px]" />
          <span className="ml-2 flex">
            <FieldIcon>
              <path d="M0 1 H18 V13 H0 Z" />
              <text x="1" y="12" fontSize="13" fill="#464646" className={`${sans} font-bold`}>VA</text>
              <path d="M0 16 L3 13.5 V15.4 H15 V13.5 L18 16 L15 18.5 V16.6 H3 V18.5 Z" />
            </FieldIcon>
          </span>
          <DarkSelect label="자간" value="-50" className="w-[79px]" />
        </div>
        <div className="mt-[3px] flex">
          <FieldIcon>
            <text x="4" y="11" fontSize="10">あ</text>
            <path d="M3.5 2 V13 M15.5 2 V13" stroke="currentColor" strokeDasharray="1 1" />
            <path d="M3 15.5 H6 V13.9 L8.5 16 L6 18.1 V16.5 H3 Z M16 15.5 H13 V13.9 L10.5 16 L13 18.1 V16.5 H16 Z" />
          </FieldIcon>
          <DarkSelect label="비율 간격" value="0%" className="w-[85px]" />
        </div>
        <div className="mt-[3px] flex items-center">
          <FieldIcon>
            <path d="M3 3 L5.5 6 H3.6 V13 H5.5 L3 16 L0.5 13 H2.4 V6 H0.5 Z" />
            <text x="6" y="15" fontSize="16" className={serif}>T</text>
          </FieldIcon>
          <DarkInput label="세로 비율" value="100%" />
          <span className="ml-[61px] flex">
            <FieldIcon>
              <text x="4" y="13" fontSize="15" className={serif}>T</text>
              <path d="M1 16 L4 13.5 V15.4 H16 V13.5 L19 16 L16 18.5 V16.6 H4 V18.5 Z" />
            </FieldIcon>
          </span>
          <DarkInput label="가로 비율" value="100%" />
        </div>
        <div className="mt-[3px] flex items-center">
          <FieldIcon>
            <text x="1" y="14" fontSize="13" className={sans}>A</text>
            <text x="11" y="9" fontSize="9" className={sans}>a</text>
            <path d="M1 15.4 H10 V16.4 H1 Z M11 10 H17 V11 H11 Z M14 11.6 L16.5 14.6 H14.6 V18 H13.4 V14.6 H11.5 Z" />
          </FieldIcon>
          <DarkInput label="기준선 이동" value="0 pt" />
          <span className="ml-auto mr-1.5 text-[13px] text-[#c8c8c8]">색상 :</span>
          <button aria-label="텍스트 색상" className="mr-[46px] h-[21px] w-[55px] border border-[#444] bg-black" />
        </div>
        <div className="mt-[3px] flex h-6 items-center pl-2.5">
          {fauxStyles.map((f) => (
            <button key={f.label} aria-label={f.label} className="w-6 whitespace-nowrap text-center font-['DejaVu_Serif',serif] text-[13px] font-bold leading-4 text-[#dcdcdc]">
              {f.node}
            </button>
          ))}
        </div>
        <div className="mt-[3px] flex h-7 items-center pl-2.5">
          {openTypeFeatures.map((f) => (
            <button key={f.label} aria-label={f.label} className="w-6 whitespace-nowrap text-center font-['Liberation_Serif','DejaVu_Serif',serif] text-[17px] leading-4 text-[#949494]">
              {f.node}
            </button>
          ))}
        </div>
        <div className="flex items-center text-[12px]">
          <DarkSelect label="언어" value="영어 : 미국" box={false} height="h-[23px]" className="w-[121px] pl-1.5" />
          <span className={`flex w-6 items-start justify-center text-[12px] text-[#d8d8d8] ${sans}`}>
            <span className="-mt-1">a</span>a
          </span>
          <DarkSelect label="앤티 앨리어스" value="선명 ..." box={false} height="h-[23px]" className="w-[67px] pl-1.5" />
        </div>
      </div>
    </section>
  );
}

function DimPercent({ id }: { id: string }) {
  return (
    <div className="flex h-[19px] w-[55px] border border-[#626262] text-[11px] text-[#808080]">
      <input id={id} disabled defaultValue="100%" className="m-0.5 w-[34px] bg-[#494949] pl-0.5" />
      <span className="flex flex-1 items-center justify-center border-l border-[#626262]"><Chevron size={8} /></span>
    </div>
  );
}

function LayersPanel() {
  return (
    <section aria-label="레이어" className="flex min-h-0 flex-1 flex-col border-t-2 border-[#383838] bg-[#4d4d4d]">
      <PanelTabs tabs={["3D", "레이어", "채널"]} active="레이어" />
      <div className="flex h-8 items-center border-b border-[#404040] bg-[#535353] pl-[3px] pt-1 text-[#a4a4a4]">
        <div className="flex h-[23px] w-[86px] items-center rounded-sm border border-[#606060] bg-[#4e4e4e] pl-[7px]">
          <Search size={12} strokeWidth={3} />
          <select aria-label="필터 종류" className="ml-1 min-w-0 flex-1 appearance-none text-[12px]">
            <option>종류</option>
          </select>
          <Chevron size={9} className="mr-0.5 text-[#707070]" />
        </div>
        <div className="ml-[15px] flex items-center gap-2 pb-1">
          <button aria-label="픽셀 레이어" className="flex w-4 justify-center">
            <svg width="13" height="11" viewBox="0 0 13 11" fill="none" stroke="currentColor" strokeWidth="1.2"><path d="M0.6 0.6 H12.4 V10.4 H0.6 Z" /><path d="M2.5 8.5 L5 4 L7 7 L8.4 5 L10.6 8.5 Z" fill="currentColor" stroke="none" /></svg>
          </button>
          <button aria-label="조정 레이어" className="flex w-4 justify-center"><HalfCircle size={13} /></button>
          <button aria-label="문자 레이어" className="flex w-4 justify-center"><SlabT className="text-[13px] leading-4" /></button>
          <button aria-label="모양 레이어" className="flex w-4 justify-center">
            <svg width="13" height="13" viewBox="0 0 13 13" fill="none" stroke="currentColor" strokeWidth="1.1"><path d="M2 2 H11 V11 H2 Z M0.5 0.5 H3 V3 H0.5 Z M10 0.5 H12.5 V3 H10 Z M0.5 10 H3 V12.5 H0.5 Z M10 10 H12.5 V12.5 H10 Z" /></svg>
          </button>
          <button aria-label="고급 개체" className="flex w-4 justify-center">
            <svg width="12" height="13" viewBox="0 0 12 13" fill="none" stroke="currentColor" strokeWidth="1.2"><path d="M4 5 V0.8 H8.4 L11.2 3.4 V11 H7" /><path d="M0.4 6.4 H6.4 V12.4 H0.4 Z" fill="currentColor" /></svg>
          </button>
        </div>
        <button aria-label="필터 켜기" className="mb-1 ml-3.5 h-[17px] w-2 rounded-full bg-[#484848]"><span className="mb-2 block h-2 w-2 rounded-full bg-[#b4b4b4]" /></button>
      </div>
      <div className="flex h-[29px] items-center border-b border-[#404040] bg-[#535353] pl-[3px] text-[#909090]">
        <div className="flex h-[22px] w-[118px] items-center rounded-sm border border-[#606060] bg-[#4e4e4e] pl-2.5">
          <select aria-label="혼합 모드" disabled className="min-w-0 flex-1 appearance-none text-[12px] opacity-100">
            <option>표준</option>
          </select>
          <Chevron size={9} className="mr-0.5 text-[#707070]" />
        </div>
        <label htmlFor="opacity" className="ml-2 w-[55px] whitespace-nowrap pb-0.5 text-[12px]">불투명도:</label>
        <DimPercent id="opacity" />
      </div>
      <div className="flex h-8 items-center bg-[#535353] pb-1 pl-2 text-[#a0a0a0]">
        <span className="w-[47px] text-[12px] text-[#909090]">잠그기 :</span>
        <div className="flex items-center gap-2">
          <button aria-label="투명 픽셀 잠그기" className="flex w-3.5 justify-center">
            <svg width="12" height="12" viewBox="0 0 12 12" fill="currentColor"><path d="M1 1 H4.3 V4.3 H1 Z M7.7 1 H11 V4.3 H7.7 Z M4.3 4.3 H7.7 V7.7 H4.3 Z M1 7.7 H4.3 V11 H1 Z M7.7 7.7 H11 V11 H7.7 Z" /><path d="M0.5 0.5 H11.5 V11.5 H0.5 Z" fill="none" stroke="currentColor" /></svg>
          </button>
          <button aria-label="이미지 픽셀 잠그기" className="flex w-3.5 justify-center"><BrushIcon /></button>
          <button aria-label="위치 잠그기" className="flex w-3.5 justify-center"><MoveIcon size={13} /></button>
          <button aria-label="자동 중첩 방지" className="flex w-4 justify-center">
            <svg width="14" height="12" viewBox="0 0 14 12" fill="none" stroke="currentColor" strokeWidth="1.2"><path d="M3 0 V10 H14 M0 2 H8 M11.4 4 V12" /><path d="M9 0.5 L12 3.4 H9 Z" fill="currentColor" stroke="none" /></svg>
          </button>
          <button aria-label="모두 잠그기" className="flex w-3.5 justify-center">
            <svg width="10" height="12" viewBox="0 0 10 12"><path d="M2.4 5.5 V3.4 A2.6 2.6 0 0 1 7.6 3.4 V5.5" fill="none" stroke="currentColor" strokeWidth="1.4" /><path fillRule="evenodd" d="M0 5.2 H10 V12 H0 Z M4.3 7.4 V9.8 H5.7 V7.4 Z" fill="currentColor" /></svg>
          </button>
        </div>
        <label htmlFor="fill" className="ml-[7px] w-[18px] whitespace-nowrap text-[12px]">칠:</label>
        <DimPercent id="fill" />
      </div>
      <div className="flex min-h-0 flex-1">
        <ul className="min-w-0 flex-1">
          <li className="flex h-10 items-stretch border-b border-[#424242]">
            <button aria-label="레이어 가시성" className="flex w-[30px] items-center justify-center text-[#e4e4e4]">
              <svg width="14" height="10" viewBox="0 0 14 10"><path fillRule="evenodd" fill="currentColor" d="M0.5 5 Q7 -3.6 13.5 5 Q7 13.6 0.5 5 Z M7 2 A3 3 0 1 0 7 8 A3 3 0 1 0 7 2 Z" /><circle cx="7" cy="5" r="1.7" fill="currentColor" /></svg>
            </button>
            <div className="flex flex-1 items-center bg-[#6a6a6a] pl-1 text-[13px] text-white">
              <svg width="24" height="32" viewBox="0 0 24 32" aria-hidden="true"><path d="M0 0 H24 V32 H0 Z" fill="#3a2a2a" /><path d="M1 2 H23 V32 H1 Z" fill="#fff" /><path d="M1 21.5 H23" stroke="#e0a8ac" /><path d="M3 3.5 H7" stroke="#888" /></svg>
              <span className="ml-2.5 flex-1">배경</span>
              <svg width="10" height="12" viewBox="0 0 10 12" className="mr-4" fill="none" stroke="#e4e4e4" strokeWidth="1.1"><path d="M0.6 5 H9.4 V11.4 H0.6 Z M2.6 5 V3.2 A2.4 2.4 0 0 1 7.4 3.2 V5 M4.4 8.2 H5.6" /></svg>
            </div>
          </li>
        </ul>
        <div className="w-4 bg-[#494949]" />
      </div>
      <div className="flex h-6 shrink-0 items-center justify-end gap-[11px] border-t border-[#404040] bg-[#535353] pr-[25px] text-[#dcdcdc]">
        <button aria-label="레이어 연결" className="flex w-4 justify-center text-[#8c8c8c]"><Link2 size={16} /></button>
        <button aria-label="레이어 스타일" className="w-4 font-['Liberation_Serif',serif] text-[15px] font-bold italic leading-4 text-[#8c8c8c]">fx</button>
        <button aria-label="마스크 추가" className="flex w-4 justify-center">
          <svg width="13" height="11" viewBox="0 0 13 11"><path fillRule="evenodd" fill="currentColor" d="M0 0 H13 V11 H0 Z M6.5 2.3 A3.2 3.2 0 1 0 6.5 8.7 A3.2 3.2 0 1 0 6.5 2.3 Z" /></svg>
        </button>
        <button aria-label="조정 레이어 만들기" className="flex w-4 justify-center"><HalfCircle size={13} /></button>
        <button aria-label="새 그룹" className="flex w-4 justify-center">
          <svg width="12" height="11" viewBox="0 0 12 11" fill="currentColor"><path d="M0 0 H5.5 V1.6 H0 Z M0 2.4 H12 V11 H0 Z" /></svg>
        </button>
        <button aria-label="새 레이어" className="flex w-4 justify-center">
          <svg width="12" height="12" viewBox="0 0 12 12" fill="none" stroke="currentColor" strokeWidth="1.2"><path d="M0.6 0.6 H11.4 V11.4 H0.6 Z M6 3.4 V8.6 M3.4 6 H8.6" /></svg>
        </button>
        <button aria-label="레이어 삭제" className="flex w-4 justify-center text-[#8c8c8c]"><Trash2 size={14} /></button>
      </div>
    </section>
  );
}

function DoubleChevron({ flip = false }: { flip?: boolean }) {
  return (
    <svg width="8" height="6" viewBox="0 0 8 6" fill="none" stroke="#dcdcdc" strokeWidth="1.4" aria-hidden="true">
      <path d={flip ? "M3.4 0.5 L1 3 L3.4 5.5 M7.4 0.5 L5 3 L7.4 5.5" : "M0.6 0.5 L3 3 L0.6 5.5 M4.6 0.5 L7 3 L4.6 5.5"} />
    </svg>
  );
}

export default function App() {
  return (
    <div className="relative flex h-screen flex-col overflow-hidden bg-[#383838] font-['Noto_Sans_CJK_KR',sans-serif]">
      <header>
        <div className="flex h-[25px] justify-end border-b border-[#383838] bg-[#535353] pr-[3px]">
          <div className="flex h-[19px] items-center rounded-b border border-t-0 border-[#666] text-[#b4b4b4]">
            <button aria-label="최소화" className="flex h-full w-7 items-center justify-center border-r border-[#666] pt-1.5"><span className="h-[3px] w-2.5 bg-current" /></button>
            <button aria-label="이전 크기로" className="flex h-full w-[27px] items-center justify-center border-r border-[#666]">
              <svg width="12" height="10" viewBox="0 0 12 10" fill="none" stroke="currentColor" strokeWidth="1.6"><path d="M0.8 4 H6.8 V9.2 H0.8 Z M4.8 3 V0.8 H11.2 V6.4 H8" /></svg>
            </button>
            <button aria-label="앱 닫기" className="flex h-full w-[46px] items-center justify-center">
              <svg width="10" height="9" viewBox="0 0 10 9" fill="none" stroke="currentColor" strokeWidth="2"><path d="M0.8 0.5 L9.2 8.5 M9.2 0.5 L0.8 8.5" /></svg>
            </button>
          </div>
        </div>
        <div className="flex h-9 items-center justify-end border-b border-[#383838] bg-[#535353] pb-px pr-2.5 text-[#d4d4d4]">
          <button className="h-6 w-[53px] rounded-full bg-[#1473e6] pb-0.5 text-[13px] leading-5 text-white">공유</button>
          <button aria-label="검색" className="ml-3"><Search size={16} /></button>
          <button aria-label="작업 영역" className="ml-3.5 flex items-center gap-2.5">
            <svg width="16" height="13" viewBox="0 0 16 13" fill="none" stroke="currentColor" strokeWidth="1.2"><path d="M0.6 0.6 H15.4 V12.4 H0.6 Z M0.6 2 H15.4" /><path d="M2.4 4.2 H4.4 M2.4 6.6 H4.4 M2.4 9 H4.4" strokeWidth="1.6" /></svg>
            <Chevron size={8} />
          </button>
          <button aria-label="내보내기" className="ml-[11px]">
            <svg width="16" height="16" viewBox="0 0 16 16" fill="none" stroke="currentColor" strokeWidth="1.8"><path d="M4.6 6 H1 V15 H15 V6 H11.4 M8 11 V2 M5 4.6 L8 1.4 L11 4.6" /></svg>
          </button>
        </div>
      </header>

      <div className="flex min-h-0 flex-1">
        <aside className="mr-0.5 flex w-[72px] shrink-0 flex-col border-l border-[#383838]">
          <div className="mb-px h-[11px] bg-[#424242]" />
          <div className="mb-0.5 flex-1 bg-[#535353]" />
        </aside>
        <DocumentWindow />
        <div className="ml-[3px] flex shrink-0 flex-col pb-0.5 pr-px">
          <div className="mb-px flex h-[11px] shrink-0 items-center justify-between bg-[#424242] pl-6 pr-1.5">
            <DoubleChevron flip />
            <DoubleChevron />
          </div>
          <div className="flex min-h-0 flex-1 gap-[3px]">
            <IconDock />
            <div className="flex w-[261px] flex-col gap-px">
              <HistoryPanel />
              <CharacterPanel />
              <LayersPanel />
            </div>
          </div>
        </div>
      </div>

      <SaveDialog />
    </div>
  );
}
